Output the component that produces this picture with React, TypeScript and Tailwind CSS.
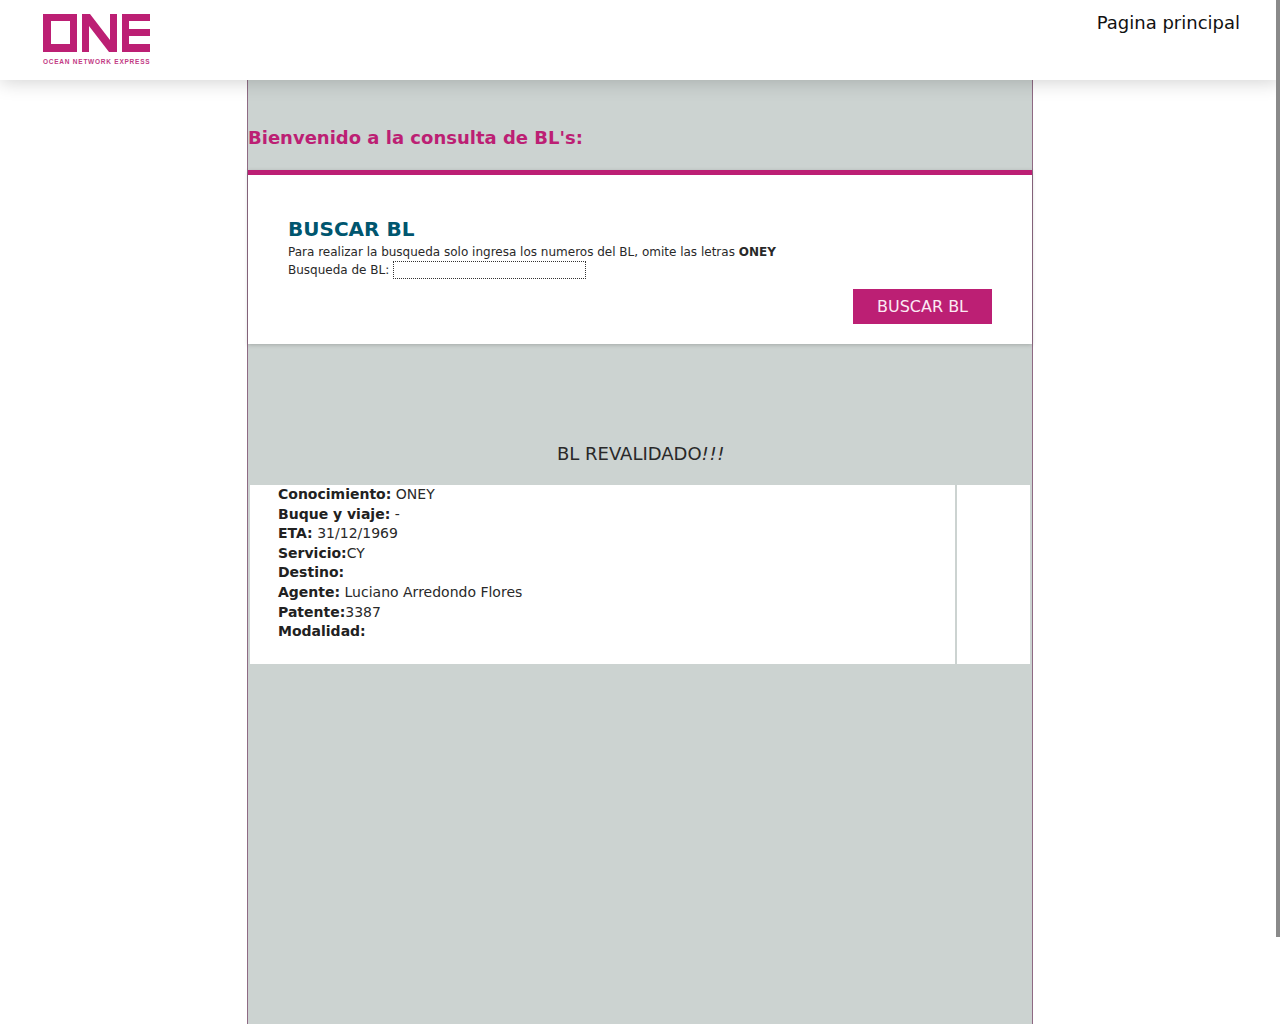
import React from 'react';

const FONT = 'font-["DejaVu_Sans",sans-serif]';

const details: { label: string; value: string; gap?: boolean }[] = [
  { label: 'Conocimiento:', value: 'ONEY', gap: true },
  { label: 'Buque y viaje:', value: '-', gap: true },
  { label: 'ETA:', value: '31/12/1969', gap: true },
  { label: 'Servicio:', value: 'CY' },
  { label: 'Destino:', value: '' },
  { label: 'Agente:', value: 'Luciano Arredondo Flores', gap: true },
  { label: 'Patente:', value: '3387' },
  { label: 'Modalidad:', value: '' },
];

const Logo = () => (
  <div className="flex w-[108px] flex-col">
    <svg width="108" height="38" viewBox="0 0 108 38" className="block">
      <path fill="#bc1f74" fillRule="evenodd" d="M0 0H34V38H0ZM8 7V30H27V7Z" />
      <path fill="#bc1f74" d="M39 0H47L67 26V0H74V38H66L46 12V38H39Z" />
      <path fill="#bc1f74" d="M79 0H107V7H86V15H107V22H86V30H107V38H79Z" />
    </svg>
    <span className='mt-[5px] whitespace-nowrap font-["Liberation_Sans",sans-serif] text-[6.5px] leading-[9px] font-bold tracking-[0.76px] text-[#c23a84]'>
      OCEAN NETWORK EXPRESS
    </span>
  </div>
);

export default function App() {
  return (
    <div className={`relative h-[1024px] overflow-hidden bg-white ${FONT}`}>
      {/* Header */}
      <header className="relative z-10 flex h-20 items-start justify-between bg-white pt-[14px] pr-10 pl-[43px] shadow-[0_2px_18px_rgba(0,0,0,0.18)]">
        <Logo />
        <a className="-mt-[3px] text-lg leading-[24px] text-[#111111]">Pagina principal</a>
      </header>

      {/* Main column */}
      <main className="mx-auto h-[944px] w-[786px] border-x border-[#8f6a84] bg-[#ccd3d1]">
        <h1 className="h-[90px] pt-[46px] text-lg leading-[24px] font-bold text-[#bc1f74]">
          Bienvenido a la consulta de BL's:
        </h1>

        <section className="h-[174px] border-t-[5px] border-[#bc1f74] bg-white px-10 pt-[41px] shadow-[0_1px_4px_rgba(0,0,0,0.2)]">
          <h2 className="text-xl leading-[26px] font-bold text-[#00566f]">BUSCAR BL</h2>
          <p className="mt-[1px] text-xs leading-[18px] text-[#292929]">
            Para realizar la busqueda solo ingresa los numeros del BL, omite las letras <b>ONEY</b>
          </p>
          <div className="flex h-[18px] items-center text-xs text-[#292929]">
            <label>Busqueda de BL:</label>
            <input className="ml-1 h-[18px] w-[193px] border border-dotted border-[#333] bg-white" />
          </div>
          <div className="mt-[10px] flex justify-end">
            <button className="h-[35px] w-[139px] bg-[#bc1f74] text-base text-[#fbe9f3]">BUSCAR BL</button>
          </div>
        </section>

        <h3 className="pt-[98px] pl-[2px] text-center text-lg leading-[24px] text-[#292929]">
          BL REVALIDADO<i className="tracking-[0.6px]">!!!</i>
        </h3>

        <div className="mx-[2px] mt-[19px] flex h-[179px] bg-white">
          <div className="flex-1 border-r-2 border-[#ccd3d1] pl-7 text-sm leading-[19.6px] text-[#292929]">
            {details.map(d => (
              <div key={d.label}>
                <b className="text-[#212121]">{d.label}</b>
                {d.gap ? ' ' : ''}
                {d.value}
              </div>
            ))}
          </div>
          <div className="w-[73px]" />
        </div>
      </main>

      {/* Scrollbar thumb */}
      <div className="absolute top-0 right-0 z-20 h-[937px] w-1 bg-[#8a8a8a]" />
    </div>
  );
}
